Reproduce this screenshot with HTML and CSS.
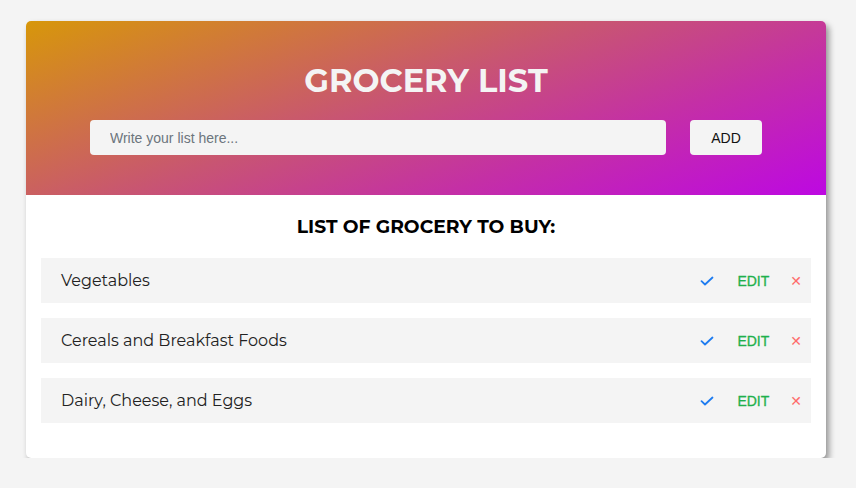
FILE: index.html
```html
<!DOCTYPE html>
<html>
<head>
<meta charset="utf-8">
<link rel="stylesheet" href="styles.css">
</head>
<body>
<div class="card">
  <header class="head">
    <h1 class="title">GROCERY LIST</h1>
    <form class="form">
      <input class="input" type="text" placeholder="Write your list here...">
      <button class="add" type="button">ADD</button>
    </form>
  </header>
  <section class="body">
    <h2 class="subtitle">LIST OF GROCERY TO BUY:</h2>
    <ul class="list">
      <li class="item"><span class="name">Vegetables</span><span class="actions"><span class="check"><svg width="14" height="10" viewBox="0 0 14 10"><path d="M1.5 5.2 L5 8.5 L12.5 1.5" fill="none" stroke="#1e7cf0" stroke-width="1.8" stroke-linecap="round" stroke-linejoin="round"/></svg></span><span class="edit">EDIT</span><span class="del">✕</span></span></li>
      <li class="item"><span class="name">Cereals and Breakfast Foods</span><span class="actions"><span class="check"><svg width="14" height="10" viewBox="0 0 14 10"><path d="M1.5 5.2 L5 8.5 L12.5 1.5" fill="none" stroke="#1e7cf0" stroke-width="1.8" stroke-linecap="round" stroke-linejoin="round"/></svg></span><span class="edit">EDIT</span><span class="del">✕</span></span></li>
      <li class="item"><span class="name">Dairy, Cheese, and Eggs</span><span class="actions"><span class="check"><svg width="14" height="10" viewBox="0 0 14 10"><path d="M1.5 5.2 L5 8.5 L12.5 1.5" fill="none" stroke="#1e7cf0" stroke-width="1.8" stroke-linecap="round" stroke-linejoin="round"/></svg></span><span class="edit">EDIT</span><span class="del">✕</span></span></li>
    </ul>
  </section>
</div>
</body>
</html>
```

FILE: styles.css
```css
* { box-sizing: border-box; }
html, body { margin: 0; padding: 0; }
body {
  background: #f4f4f4;
  font-family: Montserrat, "DejaVu Sans", sans-serif;
  padding: 21px 30px 0 26px;
}
.card {
  width: 800px;
  background: #fff;
  border-radius: 5px;
  overflow: hidden;
  box-shadow: 3px 4px 6px rgba(0,0,0,0.4);
}
.head {
  height: 174px;
  background: linear-gradient(160deg, #d7970a 0%, #c85572 45%, #c42fa6 70%, #bd08e2 100%);
  display: flex;
  flex-direction: column;
  align-items: center;
  padding-top: 40px;
}
.title {
  margin: 0;
  color: #f4f4f4;
  font-size: 32px;
  font-weight: 700;
  line-height: 40px;
}
.form {
  margin-top: 19px;
  display: flex;
  gap: 24px;
}
.input {
  width: 576px;
  height: 35px;
  border: none;
  border-radius: 4px;
  background: #f4f4f4;
  padding: 0 20px;
  font-family: "Liberation Sans", Arial, sans-serif;
  font-size: 14px;
  color: #333;
  outline: none;
}
.input::placeholder { color: #6c757d; }
.add {
  width: 72px;
  height: 35px;
  border: none;
  border-radius: 4px;
  background: #f4f4f4;
  font-family: "Liberation Sans", Arial, sans-serif;
  font-size: 14px;
  color: #111;
  padding: 0;
}
.body {
  padding: 20px 15px 35px;
}
.subtitle {
  margin: 0;
  text-align: center;
  font-size: 18.7px;
  font-weight: 700;
  line-height: 24px;
  color: #000;
}
.list {
  list-style: none;
  margin: 19px 0 0;
  padding: 0;
  display: flex;
  flex-direction: column;
  gap: 15px;
}
.item {
  height: 45px;
  background: #f4f4f4;
  display: flex;
  align-items: center;
  justify-content: space-between;
  padding: 0 9px 0 20px;
}
.name {
  font-size: 16px;
  color: #222;
}
.actions {
  display: flex;
  align-items: center;
}
.check { display: flex; margin-right: 23px; }
.edit {
  font-family: "Liberation Sans", Arial, sans-serif;
  font-size: 14px;
  color: #1fb04c;
  margin-right: 21px;
  -webkit-text-stroke: 0.3px #1fb04c;
}
.del {
  font-family: "DejaVu Sans", sans-serif;
  font-size: 14px;
  color: #ff6b6b;
}
```
